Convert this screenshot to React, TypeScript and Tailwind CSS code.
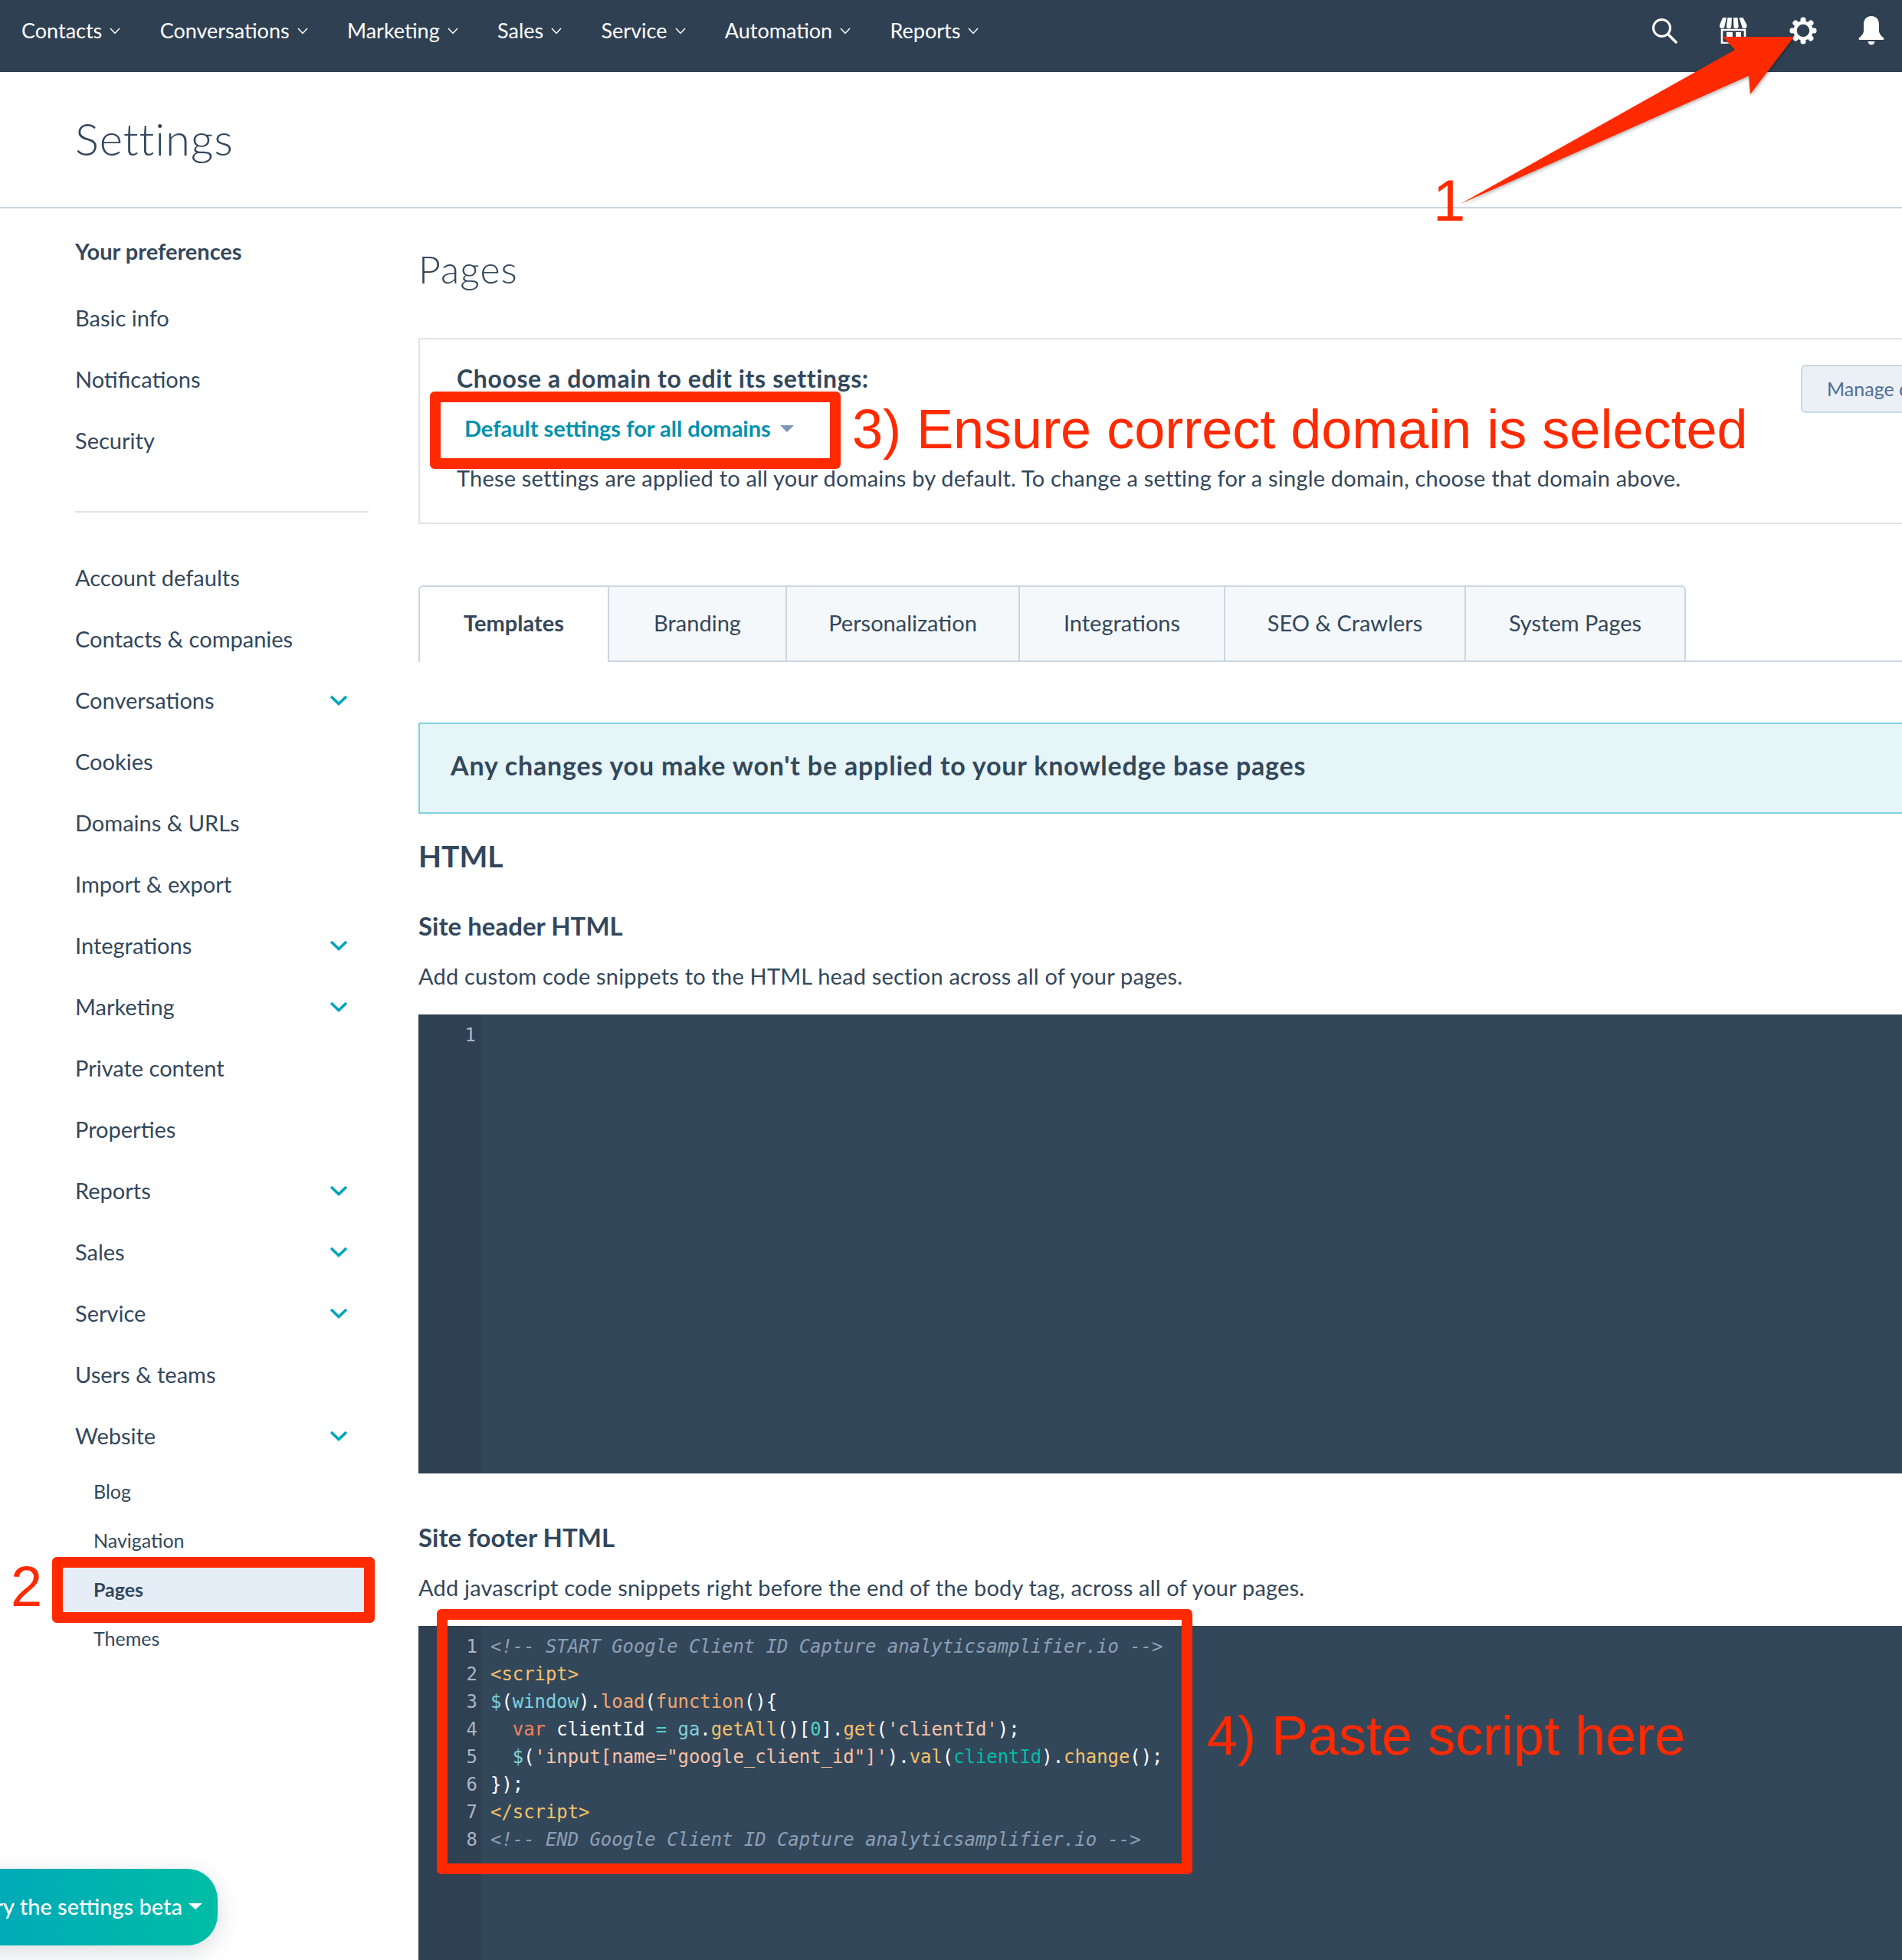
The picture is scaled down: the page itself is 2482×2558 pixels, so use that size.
const navItems = ["Contacts", "Conversations", "Marketing", "Sales", "Service", "Automation", "Reports"];

const settingsItems = [
  { label: "Account defaults" },
  { label: "Contacts & companies" },
  { label: "Conversations", more: true },
  { label: "Cookies" },
  { label: "Domains & URLs" },
  { label: "Import & export" },
  { label: "Integrations", more: true },
  { label: "Marketing", more: true },
  { label: "Private content" },
  { label: "Properties" },
  { label: "Reports", more: true },
  { label: "Sales", more: true },
  { label: "Service", more: true },
  { label: "Users & teams" },
  { label: "Website", more: true },
];

const tabs = ["Branding", "Personalization", "Integrations", "SEO & Crawlers", "System Pages"];

const tabWidths = ["w-[232px]", "w-[304px]", "w-[268px]", "w-[314px]", "w-[289px]"];

function SearchIcon() {
  return (
    <svg width="34" height="34" viewBox="0 0 34 34" fill="none" stroke="white" strokeWidth="3">
      <circle cx="13.5" cy="13.5" r="11" />
      <path d="M21.5 21.5 L32 32" strokeLinecap="round" strokeWidth="3.4" />
    </svg>
  );
}

function StoreIcon() {
  return (
    <svg width="38" height="34" viewBox="0 0 38 34" fill="white">
      <path d="M5 0h5L7.5 11a3 3 0 0 1-6.5-.5 4 4 0 0 1 .5-2z" />
      <path d="M11.5 0h5.5l-.7 11a3.2 3.2 0 0 1-6.4 0z" />
      <path d="M19 0h5.5l1.2 11a3.2 3.2 0 0 1-6.400 0z" />
      <path d="M26.500 0h5l4.500 8.500a4 4 0 0 1 .5 2 3 3 0 0 1-6.500.5z" />
      <path d="M4 16h30v17H4z" fill="none" stroke="white" strokeWidth="2.600" />
      <path d="M10 19h8v6h-8zM22 19h7v14h-7z" />
    </svg>
  );
}

function GearIcon() {
  return (
    <svg width="36" height="36" viewBox="0 0 36 36" fill="white">
      <g>
        <rect x="14.500" y="0.500" width="7" height="7" rx="3" />
        <rect x="14.500" y="28.500" width="7" height="7" rx="3" />
        <rect x="0.500" y="14.500" width="7" height="7" rx="3" />
        <rect x="28.500" y="14.500" width="7" height="7" rx="3" />
        <rect x="14.500" y="0.500" width="7" height="7" rx="3" transform="rotate(45 18 18)" />
        <rect x="14.500" y="28.500" width="7" height="7" rx="3" transform="rotate(45 18 18)" />
        <rect x="0.500" y="14.500" width="7" height="7" rx="3" transform="rotate(45 18 18)" />
        <rect x="28.500" y="14.500" width="7" height="7" rx="3" transform="rotate(45 18 18)" />
      </g>
      <circle cx="18" cy="18" r="10.500" fill="none" stroke="white" strokeWidth="4.500" />
    </svg>
  );
}

function BellIcon() {
  return (
    <svg width="34" height="38" viewBox="0 0 34 38" fill="white">
      <path d="M17 0c7 0 10 5 10 11v8c0 4 3 7 6 9.500 1 1 .5 2.500-1 2.500H2c-1.500 0-2-1.500-1-2.500C4 26 7 23 7 19v-8C7 5 10 0 17 0z" />
      <path d="M12.500 33h9c-.5 3-2.500 4.500-4.500 4.500S13 36 12.500 33z" />
    </svg>
  );
}

function SmallChevron() {
  return (
    <svg width="14" height="9" viewBox="0 0 14 9" fill="none" stroke="white" strokeWidth="1.500">
      <path d="M1 1 L7 7.500 L13 1" />
    </svg>
  );
}

function TealChevron() {
  return (
    <svg width="24" height="14" viewBox="0 0 24 14" fill="none" stroke="#00a4bd" strokeWidth="3.600">
      <path d="M2 2 L12 11.500 L22 2" />
    </svg>
  );
}

function CodeEditor({ height, children }: { height: string; children?: React.ReactNode }) {
  return (
    <div className={`flex bg-[#33475b] ${height}`}>
      <div className="w-[82px] shrink-0 bg-[#2f4052]" />
      <div className="flex-1">{children}</div>
    </div>
  );
}

function CodeLine({ n, children }: { n: number; children?: React.ReactNode }) {
  return (
    <div className="flex h-[36px] items-center whitespace-pre">
      <span className="ml-[-82px] w-[75px] text-right text-[#a9b6c4]">{n}</span>
      <span className="ml-[17px] text-white">{children}</span>
    </div>
  );
}

export default function App() {
  return (
    <div className="relative h-[2558px] w-[2482px] overflow-hidden bg-white font-['Lato','Noto_Sans',sans-serif] text-[#33475b]">
      <header className="flex h-[94px] items-start bg-[#2f4052] pl-[28px] text-white">
        <nav className="flex h-[80px] items-center gap-[51.300px] text-[27px]">
          {navItems.map((item) => (
            <div key={item} className="flex items-center gap-[10px]">
              <span>{item}</span>
              <SmallChevron />
            </div>
          ))}
        </nav>
        <div className="ml-auto flex h-[80px] items-center gap-[54px] pr-[23px]">
          <SearchIcon />
          <StoreIcon />
          <GearIcon />
          <BellIcon />
        </div>
      </header>

      <div className="flex h-[178px] items-center border-b-2 border-[#cbd6e2] pb-[2px] pl-[98px]">
        <h1 className="text-[58px] font-light leading-none tracking-[0.9px]">Settings</h1>
      </div>

      <div className="flex">
        <aside className="w-[546px] shrink-0 pt-[17px]">
          <div className="flex h-[80px] items-center pb-[2px] pl-[98px] text-[29px] font-bold">Your preferences</div>
          <div className="mt-[7px] text-[29px]">
            {["Basic info", "Notifications", "Security"].map((item) => (
              <div key={item} className="flex h-[80px] items-center pb-[2px] pl-[98px]">{item}</div>
            ))}
          </div>
          <div className="ml-[98px] mt-[51px] h-[2px] w-[383px] bg-[#dfe3eb]" />
          <div className="mt-[46px] text-[29px]">
            {settingsItems.map((item) => (
              <div key={item.label} className="flex h-[80px] w-[454px] items-center justify-between pb-[2px] pl-[98px]">
                <span>{item.label}</span>
                {item.more && <TealChevron />}
              </div>
            ))}
          </div>
          <div className="mt-[3px] text-[25px]">
            <div className="flex h-[64px] items-center pb-[6px] pl-[122px]">Blog</div>
            <div className="flex h-[64px] items-center pb-[6px] pl-[122px]">Navigation</div>
            <div className="ml-[76px] flex h-[64px] w-[405px] items-center bg-[#e5edf6] pb-[6px] pl-[46px] font-bold">Pages</div>
            <div className="flex h-[64px] items-center pb-[6px] pl-[122px]">Themes</div>
          </div>
        </aside>

        <main className="w-[2200px] shrink-0">
          <div className="flex h-[169px] items-start pt-[51px] text-[50px] font-light leading-[56px] tracking-[1px]">Pages</div>

          <section className="flex h-[243px] border-2 border-[#dfe3eb] pl-[48px]">
            <div className="w-[1754px] shrink-0">
              <div className="mt-[31px] flex h-[40px] items-center text-[32px] font-bold tracking-[0.6px]">Choose a domain to edit its settings:</div>
              <div className="mt-[25px] flex h-[40px] items-center gap-[12px] pl-[10px] text-[29px] font-bold text-[#0091ae]">
                Default settings for all domains
                <span className="h-0 w-0 border-x-[9px] border-t-[9px] border-x-transparent border-t-[#7c98b6]" />
              </div>
              <div className="mt-[25px] flex h-[40px] items-center whitespace-nowrap text-[29px] tracking-[0.2px]">
                These settings are applied to all your domains by default. To change a setting for a single domain, choose that domain above.
              </div>
            </div>
            <button className="mt-[33px] flex h-[63px] items-center whitespace-nowrap rounded-[6px] border-2 border-[#cbd6e2] bg-[#eaf0f6] px-[32px] text-[25px] text-[#506e91]">
              Manage domains
            </button>
          </section>

          <div className="mt-[80px] flex h-[100px] border-b-2 border-[#cbd6e2] text-[29px]">
            <div className="z-10 flex h-[100px] w-[247px] items-center justify-center rounded-tl-[6px] border-l-2 border-t-2 border-[#cbd6e2] bg-white pb-[4px] font-bold">
              Templates
            </div>
            {tabs.map((tab, i) => (
              <div
                key={tab}
                className={`flex items-center justify-center border-l-2 border-t-2 border-[#cbd6e2] bg-[#f5f8fa] pb-[2px] ${tabWidths[i]} ${i === tabs.length - 1 ? "rounded-tr-[6px] border-r-2" : ""}`}
              >
                {tab}
              </div>
            ))}
          </div>

          <div className="mt-[79px] flex h-[119px] items-center border-2 border-[#7fd1de] bg-[#e5f5f8] pb-[8px] pl-[40px] text-[34px] font-bold tracking-[0.8px]">
            Any changes you make won't be applied to your knowledge base pages
          </div>

          <h2 className="mt-[32px] flex h-[46px] items-center text-[39px] font-bold">HTML</h2>
          <h3 className="mt-[48px] flex h-[42px] items-center text-[33px] font-bold">Site header HTML</h3>
          <p className="mt-[24px] flex h-[40px] items-center text-[29px] tracking-[0.2px]">Add custom code snippets to the HTML head section across all of your pages.</p>
          <div className="mt-[30px]">
            <CodeEditor height="h-[599px]">
              <div className="flex h-[55px] items-center font-['DejaVu_Sans_Mono',monospace] text-[23.900px]">
                <span className="ml-[-82px] w-[75px] text-right text-[#a9b6c4]">1</span>
              </div>
            </CodeEditor>
          </div>

          <h3 className="mt-[63px] flex h-[42px] items-center text-[33px] font-bold">Site footer HTML</h3>
          <p className="mt-[24px] flex h-[40px] items-center text-[29px] tracking-[0.2px]">Add javascript code snippets right before the end of the body tag, across all of your pages.</p>
          <div className="mt-[30px]">
            <CodeEditor height="h-[440px]">
              <div className="pl-[2px] pt-[10px] font-['DejaVu_Sans_Mono',monospace] text-[23.900px]">
                <CodeLine n={1}><span className="italic text-[#8d9fb3]">{"<!-- START Google Client ID Capture analyticsamplifier.io -->"}</span></CodeLine>
                <CodeLine n={2}><span className="text-[#f5c26b]">{"<script>"}</span></CodeLine>
                <CodeLine n={3}>
                  <span className="text-[#7fd1de]">$</span>(<span className="text-[#7fd1de]">window</span>).<span className="text-[#f2a66e]">load</span>(<span className="text-[#f2a66e]">function</span>{"(){"}
                </CodeLine>
                <CodeLine n={4}>
                  {"  "}<span className="text-[#f2845c]">var</span>{" clientId "}<span className="text-[#51d3c7]">=</span>{" "}<span className="text-[#7fd1de]">ga</span>.<span className="text-[#f5c26b]">getAll</span>{"()["}<span className="text-[#51d3c7]">0</span>].<span className="text-[#f5c26b]">get</span>(<span className="text-[#f7c3a8]">'clientId'</span>);
                </CodeLine>
                <CodeLine n={5}>
                  {"  "}<span className="text-[#7fd1de]">$</span>(<span className="text-[#f7c3a8]">{"'input[name=\"google_client_id\"]'"}</span>).<span className="text-[#f5c26b]">val</span>(<span className="text-[#00bda5]">clientId</span>).<span className="text-[#f5c26b]">change</span>();
                </CodeLine>
                <CodeLine n={6}>{"});"}</CodeLine>
                <CodeLine n={7}><span className="text-[#f5c26b]">{"</script>"}</span></CodeLine>
                <CodeLine n={8}><span className="italic text-[#8d9fb3]">{"<!-- END Google Client ID Capture analyticsamplifier.io -->"}</span></CodeLine>
              </div>
            </CodeEditor>
          </div>
        </main>
      </div>

      {/* floating beta button, cut off by the left edge */}
      <div className="absolute left-[-90px] top-[2439px] flex h-[100px] w-[374px] items-center justify-end gap-[8px] rounded-[40px] bg-gradient-to-r from-[#00a4bd] to-[#00bda5] pb-[2px] pr-[20px] text-[29px] font-medium text-white shadow-[0_8px_30px_rgba(45,62,80,0.18)]">
        Try the settings beta
        <span className="h-0 w-0 border-x-[9px] border-t-[8px] border-x-transparent border-t-white" />
      </div>

      {/* red annotations drawn over the screenshot */}
      <div className="font-['Liberation_Sans',Arial,sans-serif] text-[#ff2a00]">
        <svg className="absolute left-[1900px] top-[40px] drop-shadow-[1px_2px_2px_rgba(0,0,0,0.3)]" width="450" height="235" viewBox="1900 40 450 235">
          <polygon points="2341,48 2248,48 2264,65 1906,266 2282,99 2284,123" fill="#ff2a00" />
        </svg>
        <span className="absolute left-[1870px] top-[220px] text-[76px] leading-[84px]">1</span>
        <span className="absolute left-[14px] top-[2031px] text-[74px] leading-[80px]">2</span>
        <span className="absolute left-[1112px] top-[518px] whitespace-nowrap text-[72px] leading-[84px]">3) Ensure correct domain is selected</span>
        <span className="absolute left-[1575px] top-[2223px] whitespace-nowrap text-[72px] leading-[84px]">4) Paste script here</span>
        <div className="absolute left-[561px] top-[511px] h-[101px] w-[536px] rounded-[6px] border-[14px] border-[#ff2a00]" />
        <div className="absolute left-[68px] top-[2032px] h-[86px] w-[421px] rounded-[6px] border-[14px] border-[#ff2a00]" />
        <div className="absolute left-[570px] top-[2100px] h-[346px] w-[986px] rounded-[6px] border-[14px] border-[#ff2a00]" />
      </div>
    </div>
  );
}
